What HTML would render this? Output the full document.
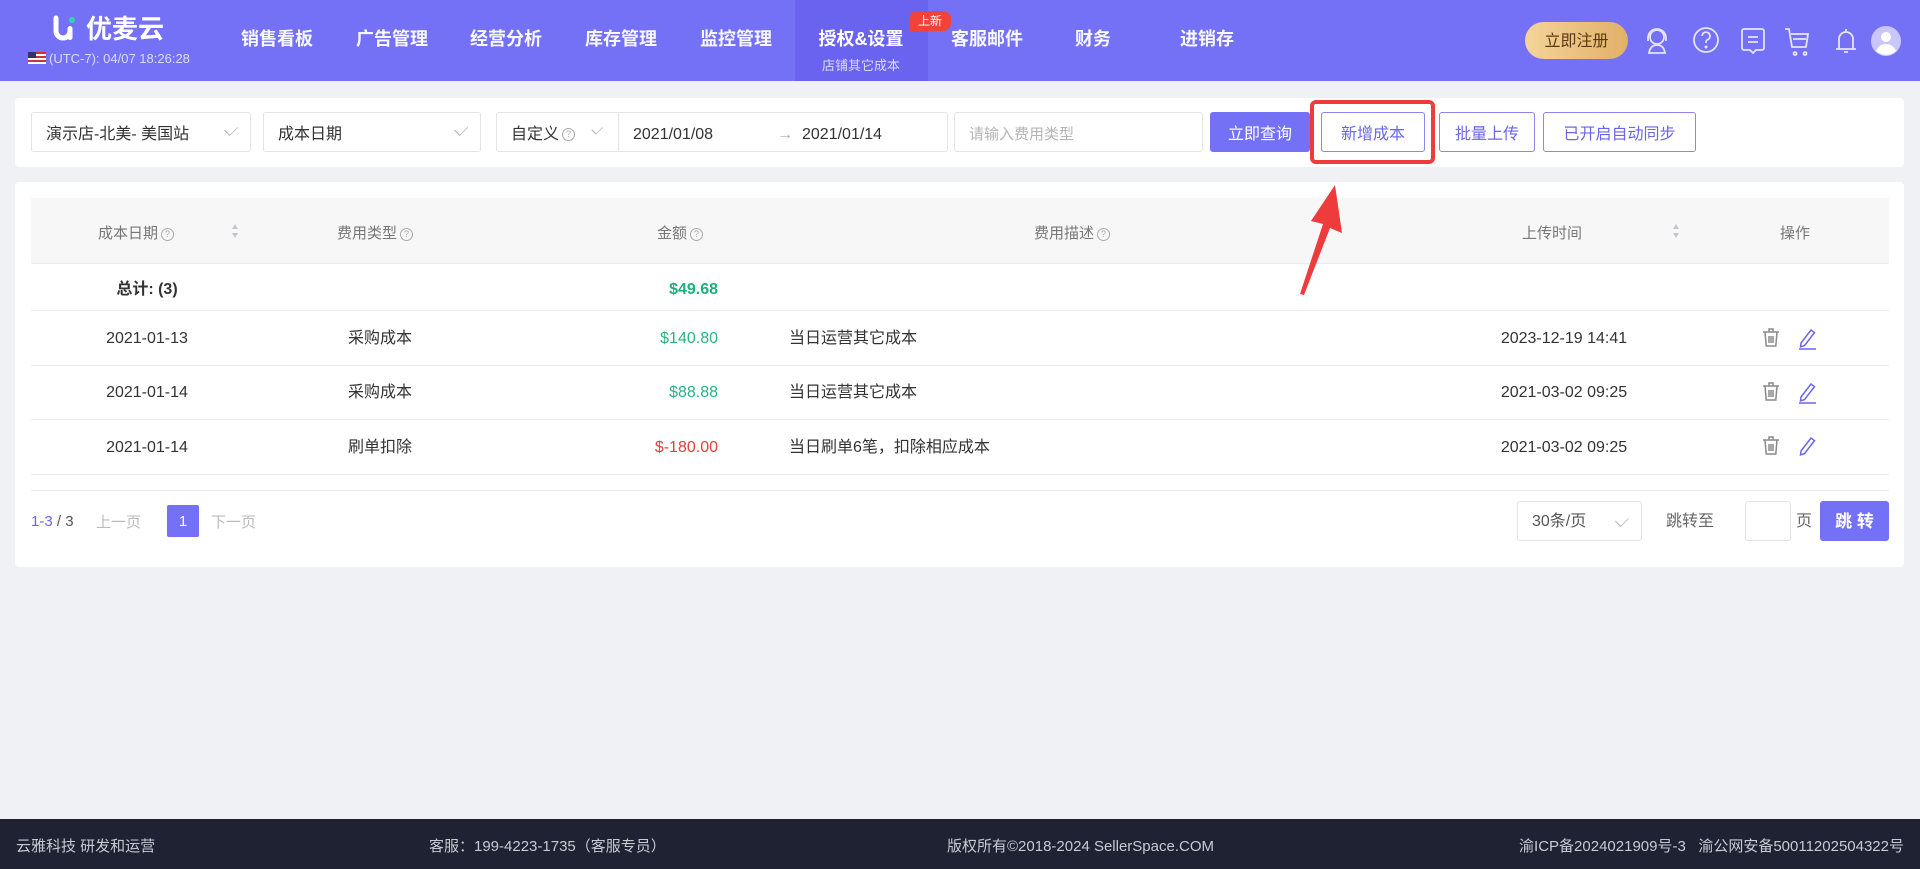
<!DOCTYPE html>
<html><head><meta charset="utf-8">
<style>
*{box-sizing:border-box;margin:0;padding:0}
body{width:1920px;height:869px;background:#f0f1f5;font-family:"Liberation Sans","Noto Sans CJK SC",sans-serif;color:#333;position:relative;overflow:hidden;font-size:16px;line-height:20px}
.abs{position:absolute}
.hdr{left:0;top:0;width:1920px;height:81px;background:#7571f6}
.nav{top:28px;color:#fff;font-size:18px;line-height:22px;font-weight:bold;transform:translateX(-50%);white-space:nowrap;opacity:.95}
.box{background:#fff;border:1px solid #e3e4e8;border-radius:3px;height:40px;top:112px;display:flex;align-items:center;padding-left:14px;padding-top:5px;font-size:16px;color:#333}
.box span.t{position:absolute;top:12px}
.chev{position:absolute;right:14px;top:11px;width:10px;height:10px;border-right:1px solid #bbb;border-bottom:1px solid #bbb;transform:rotate(45deg) scale(.8,1.2);transform-origin:center}
.btn{top:112px;height:40px;border:1px solid #8b86f0;border-radius:3px;color:#6b66e8;background:#fff;display:flex;align-items:center;justify-content:center;font-size:16px;padding-top:5px}
.th{top:224px;color:#777;font-size:15px;white-space:nowrap}
.td{font-size:16px;white-space:nowrap;color:#333}
.line{left:31px;width:1858px;height:1px;background:#ebecef}
.q{display:inline-block;width:13px;height:13px;border:1px solid #aaa;border-radius:50%;font-size:9px;line-height:11px;text-align:center;color:#aaa;vertical-align:1px;margin-left:3px}
.sort{width:8px;height:18px}
.foot{left:0;top:819px;width:1920px;height:50px;background:#1e2232;color:#c8cad2;font-size:15px}
</style></head><body>
<div class="abs hdr"></div>
<div class="abs" style="left:795px;top:0;width:133px;height:81px;background:#6a63f0"></div>
<svg class="abs" style="left:52px;top:14px" width="30" height="30" viewBox="0 0 30 30"><path d="M4 4v13a7 7 0 0 0 14 0" stroke="#fff" stroke-width="5" fill="none" stroke-linecap="round"/><rect x="15.5" y="12" width="5" height="14" rx="2.5" fill="#fff"/><circle cx="20" cy="6" r="3" fill="#2ed3b0"/></svg>
<div class="abs" style="left:86px;top:12px;color:#fff;font-size:26px;line-height:34px;font-weight:bold">优麦云</div>
<div class="abs" style="left:28px;top:52px;width:18px;height:12px;background:repeating-linear-gradient(#c33 0 2px,#fff 2px 4px)"><div style="width:8px;height:6px;background:#336"></div></div>
<div class="abs" style="left:49px;top:51px;color:#dcdaff;font-size:13px;line-height:16px">(UTC-7): 04/07 18:26:28</div>
<div class="abs nav" style="left:277px">销售看板</div>
<div class="abs nav" style="left:392px">广告管理</div>
<div class="abs nav" style="left:506px">经营分析</div>
<div class="abs nav" style="left:621px">库存管理</div>
<div class="abs nav" style="left:736px">监控管理</div>
<div class="abs nav" style="left:861px;opacity:1">授权&amp;设置</div>
<div class="abs" style="left:861px;top:58px;transform:translateX(-50%);color:#dcdaff;font-size:13px;line-height:16px;white-space:nowrap">店铺其它成本</div>
<div class="abs" style="left:909px;top:11px;width:42px;height:20px;background:#f0443b;border-radius:8px 8px 8px 0;color:#fff;font-size:12px;text-align:center;line-height:20px">上新</div>
<div class="abs nav" style="left:987px">客服邮件</div>
<div class="abs nav" style="left:1093px">财务</div>
<div class="abs nav" style="left:1207px">进销存</div>
<div class="abs" style="left:1525px;top:22px;width:103px;height:37px;border-radius:19px;background:linear-gradient(90deg,#f3d49a,#e2b068);color:#5a3a10;font-size:16px;text-align:center;line-height:39px">立即注册</div>
<svg class="abs" style="left:1640px;top:24px" width="270" height="34" viewBox="0 0 270 34" fill="none" stroke="#e6e4ff" stroke-width="1.8">
<circle cx="17" cy="13" r="7"/><path d="M8 14a9 9 0 0 1 18 0M8 13v4M26 13v4M9 29c1-6 4-8 8-8s7 2 8 8z"/>
<circle cx="66" cy="16" r="12"/><path d="M62 12a4 4 0 1 1 5 4c-1 .5-1 1.5-1 3"/><circle cx="66" cy="23" r=".6" fill="#e6e4ff"/>
<path d="M104 5h18a2 2 0 0 1 2 2v17a2 2 0 0 1-2 2h-6l-3 3-3-3h-6a2 2 0 0 1-2-2V7a2 2 0 0 1 2-2zM108 13h10M108 18h10"/>
<path d="M145 5h4l3 18h14l2-13h-17M153 15h13M155 28a1.5 1.5 0 1 0 .1 0M165 28a1.5 1.5 0 1 0 .1 0"/>
<path d="M199 25V15a7 7 0 0 1 14 0v10h3h-20h3M204 28h4M206 5v3"/>
<circle cx="246" cy="17" r="15" fill="#fff" fill-opacity=".6" stroke="none"/><circle cx="246" cy="13" r="5" fill="#fff" stroke="none"/><path d="M236 27c2-5 6-7 10-7s8 2 10 7a15 15 0 0 1-20 0z" fill="#fff" stroke="none"/>
</svg>

<div class="abs" style="left:15px;top:98px;width:1889px;height:69px;background:#fff;border-radius:4px"></div>
<div class="abs box" style="left:31px;width:220px">演示店-北美- 美国站<span class="chev"></span></div>
<div class="abs box" style="left:263px;width:218px">成本日期<span class="chev"></span></div>
<div class="abs box" style="left:496px;width:452px">自定义 <span class="q">?</span>
<span style="position:absolute;left:96px;top:12px;width:8px;height:8px;border-right:1px solid #bbb;border-bottom:1px solid #bbb;transform:rotate(45deg) scale(.8,1.2)"></span>
<span style="position:absolute;left:121px;top:0;height:38px;border-left:1px solid #e3e4e8"></span>
<span class="t" style="left:136px">2021/01/08</span><span class="t" style="left:280px;color:#aaa">→</span><span class="t" style="left:305px">2021/01/14</span></div>
<div class="abs box" style="left:954px;width:249px;color:#b5b5b5;font-size:15px">请输入费用类型</div>
<div class="abs btn" style="left:1210px;width:100px;background:#7571f6;color:#fff;border-color:#7571f6">立即查询</div>
<div class="abs btn" style="left:1321px;width:104px">新增成本</div>
<div class="abs btn" style="left:1439px;width:96px">批量上传</div>
<div class="abs btn" style="left:1543px;width:153px">已开启自动同步</div>
<div class="abs" style="left:1310px;top:100px;width:125px;height:64px;border:4px solid #ee3b3b;border-radius:6px"></div>

<div class="abs" style="left:15px;top:182px;width:1889px;height:385px;background:#fff;border-radius:4px"></div>
<div class="abs" style="left:31px;top:198px;width:1858px;height:65px;background:#f7f7f8"></div>
<div class="abs th" style="left:98px">成本日期<span class="q">?</span></div>
<svg class="abs sort" style="left:231px;top:222px" viewBox="0 0 8 18"><path d="M4 2l3 5H1zM4 16l3-5H1z" fill="#c5c5c8"/></svg>
<div class="abs th" style="left:337px">费用类型<span class="q">?</span></div>
<div class="abs th" style="left:657px">金额<span class="q">?</span></div>
<div class="abs th" style="left:1034px">费用描述<span class="q">?</span></div>
<div class="abs th" style="left:1522px">上传时间</div>
<svg class="abs sort" style="left:1672px;top:222px" viewBox="0 0 8 18"><path d="M4 2l3 5H1zM4 16l3-5H1z" fill="#c5c5c8"/></svg>
<div class="abs th" style="left:1780px">操作</div>
<div class="abs line" style="top:263px"></div>
<div class="abs td" style="left:147px;top:280px;transform:translateX(-50%);font-weight:bold">总计: (3)</div>
<div class="abs td" style="right:1202px;top:280px;color:#1fae7e;font-weight:bold">$49.68</div>
<div class="abs line" style="top:310px"></div>
<div class="abs line" style="top:365px"></div>
<div class="abs line" style="top:419px"></div>
<div class="abs line" style="top:474px"></div>
<div class="abs line" style="top:490px"></div>

<div class="abs td" style="left:147px;top:329px;transform:translateX(-50%)">2021-01-13</div>
<div class="abs td" style="left:380px;top:329px;transform:translateX(-50%)">采购成本</div>
<div class="abs td" style="right:1202px;top:329px;color:#2bb183">$140.80</div>
<div class="abs td" style="left:789px;top:329px">当日运营其它成本</div>
<div class="abs td" style="left:1564px;top:329px;transform:translateX(-50%)">2023-12-19 14:41</div>

<div class="abs td" style="left:147px;top:383px;transform:translateX(-50%)">2021-01-14</div>
<div class="abs td" style="left:380px;top:383px;transform:translateX(-50%)">采购成本</div>
<div class="abs td" style="right:1202px;top:383px;color:#2bb183">$88.88</div>
<div class="abs td" style="left:789px;top:383px">当日运营其它成本</div>
<div class="abs td" style="left:1564px;top:383px;transform:translateX(-50%)">2021-03-02 09:25</div>

<div class="abs td" style="left:147px;top:438px;transform:translateX(-50%)">2021-01-14</div>
<div class="abs td" style="left:380px;top:438px;transform:translateX(-50%)">刷单扣除</div>
<div class="abs td" style="right:1202px;top:438px;color:#e0403a">$-180.00</div>
<div class="abs td" style="left:789px;top:438px">当日刷单6笔，扣除相应成本</div>
<div class="abs td" style="left:1564px;top:438px;transform:translateX(-50%)">2021-03-02 09:25</div>

<svg class="abs" style="left:1760px;top:326px" width="64" height="130" viewBox="0 0 64 130" fill="none" stroke-width="1.5">
<g><path d="M3 6h16M9 6V3h4v3M5 6l1.2 14h9.6L17 6M9 10v7M11 10v7M13 10v7" stroke="#8a8a8a"/><path d="M41 17l10-13 3.5 2.6-10 13-4 1.2zM39 23h17" stroke="#6b66e8"/></g>
<g transform="translate(0,54)"><path d="M3 6h16M9 6V3h4v3M5 6l1.2 14h9.6L17 6M9 10v7M11 10v7M13 10v7" stroke="#8a8a8a"/><path d="M41 17l10-13 3.5 2.6-10 13-4 1.2zM39 23h17" stroke="#6b66e8"/></g>
<g transform="translate(0,108)"><path d="M3 6h16M9 6V3h4v3M5 6l1.2 14h9.6L17 6M9 10v7M11 10v7M13 10v7" stroke="#8a8a8a"/><path d="M41 17l10-13 3.5 2.6-10 13-4 1.2zM39 23h17" stroke="#6b66e8"/></g>
</svg>

<div class="abs" style="left:31px;top:512px;font-size:15px;color:#6b66e8">1-3 <span style="color:#555">/ 3</span></div>
<div class="abs" style="left:96px;top:513px;font-size:15px;color:#bbb">上一页</div>
<div class="abs" style="left:167px;top:505px;width:32px;height:32px;background:#7571f6;color:#fff;border-radius:2px;text-align:center;line-height:33px;font-size:15px">1</div>
<div class="abs" style="left:211px;top:513px;font-size:15px;color:#bbb">下一页</div>
<div class="abs" style="left:1517px;top:501px;width:125px;height:40px;border:1px solid #e3e4e8;border-radius:3px;font-size:16px;color:#555;padding:10px 0 0 14px">30条/页<span class="chev" style="top:13px"></span></div>
<div class="abs" style="left:1666px;top:512px;font-size:16px;color:#666">跳转至</div>
<div class="abs" style="left:1745px;top:501px;width:46px;height:40px;border:1px solid #e3e4e8;border-radius:3px"></div>
<div class="abs" style="left:1796px;top:512px;font-size:16px;color:#666">页</div>
<div class="abs" style="left:1820px;top:501px;width:69px;height:40px;background:#7571f6;color:#fff;border-radius:3px;text-align:center;line-height:42px;font-size:17px;font-weight:bold">跳 转</div>

<svg class="abs" style="left:1280px;top:175px" width="80" height="130" viewBox="0 0 80 130"><path d="M55 10L62 58L50 53L24 120L20 119L43 49L31 46Z" fill="#ee3b3b"/></svg>

<div class="abs foot">
<span class="abs" style="left:16px;top:18px">云雅科技 研发和运营</span>
<span class="abs" style="left:429px;top:18px">客服：199-4223-1735（客服专员）</span>
<span class="abs" style="left:947px;top:18px">版权所有©2018-2024 SellerSpace.COM</span>
<span class="abs" style="right:16px;top:18px">渝ICP备2024021909号-3 &nbsp; 渝公网安备50011202504322号</span>
</div>
</body></html>
